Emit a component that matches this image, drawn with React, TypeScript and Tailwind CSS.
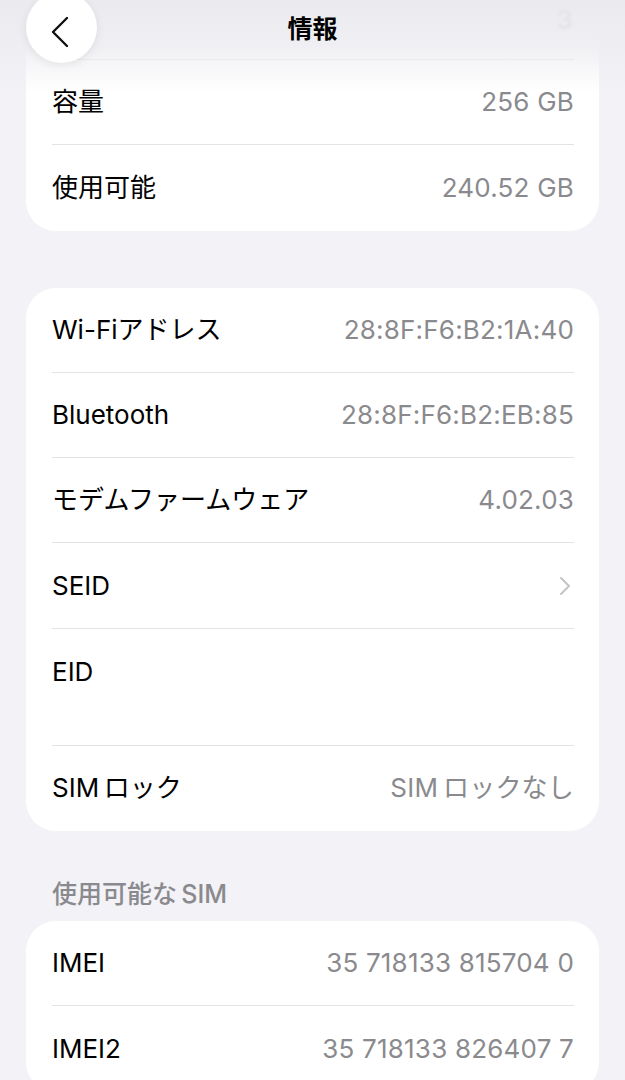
import React from "react";

type Row = {
  label: string;
  value?: string;
  chevron?: boolean;
  tall?: boolean;
};

const storageRows: Row[] = [
  { label: "容量", value: "256 GB" },
  { label: "使用可能", value: "240.52 GB" },
];

const networkRows: Row[] = [
  { label: "Wi-Fiアドレス", value: "28:8F:F6:B2:1A:40" },
  { label: "Bluetooth", value: "28:8F:F6:B2:EB:85" },
  { label: "モデムファームウェア", value: "4.02.03" },
  { label: "SEID", chevron: true },
  { label: "EID", tall: true },
  { label: "SIM\u2009ロック", value: "SIM\u2009ロックなし" },
];

const simRows: Row[] = [
  { label: "IMEI", value: "35 718133 815704 0" },
  { label: "IMEI2", value: "35 718133 826407 7" },
];

function Chevron() {
  return (
    <svg width="12" height="20" viewBox="0 0 12 20" fill="none">
      <path d="M2 2l8 8-8 8" stroke="#c4c4c7" strokeWidth="2" strokeLinecap="round" strokeLinejoin="round" />
    </svg>
  );
}

function Card({ rows, top }: { rows: Row[]; top?: boolean }) {
  return (
    <div className="mx-[26px] rounded-[30px] bg-white pl-[26px] pr-[25px]">
      {top && <div className="h-[85px] border-b border-[#e3e3e6]" />}
      {rows.map((row, i) => (
        <div
          key={row.label}
          className={
            "flex justify-between " +
            (row.tall ? "h-[117px] items-start pt-[26px] " : "h-[85.3px] items-center ") +
            (i < rows.length - 1 ? "border-b border-[#e3e3e6]" : "")
          }
        >
          <span className="text-[26px] leading-[34px] text-black">{row.label}</span>
          {row.value && (
            <span className="text-[26px] leading-[34px] tracking-[0.2px] text-[#8a8a8e]">{row.value}</span>
          )}
          {row.chevron && (
            <span className="pr-[3px]">
              <Chevron />
            </span>
          )}
        </div>
      ))}
    </div>
  );
}

export default function App() {
  return (
    <div
      className="relative h-[1080px] w-[625px] overflow-hidden bg-[#f2f2f7]"
      style={{ fontFamily: '"Inter", "Noto Sans CJK JP", sans-serif' }}
    >
      <div className="-mt-[25px]">
        <Card rows={storageRows} top />
        <div className="h-[57px]" />
        <Card rows={networkRows} />
        <div className="pl-[52px] pt-[46px] pb-[10px] text-[25px] font-medium leading-[34px] text-[#8a8a8e]">
          使用可能な{"\u2009"}SIM
        </div>
        <Card rows={simRows} />
      </div>

      {/* blurred nav bar */}
      <div className="absolute inset-x-0 top-0 h-[92px] bg-gradient-to-b from-[#ebebef] via-[#eeeef2]/90 to-transparent" />
      <div className="absolute inset-x-0 top-0 flex h-[60px] items-center justify-center">
        <span className="text-[25px] font-bold text-black">情報</span>
      </div>
      <span className="absolute right-[52px] top-[0px] text-[26px] font-semibold text-[#e4e4e8] blur-[1px]">3</span>
      <div className="absolute left-[26px] top-[-8px] flex h-[71px] w-[71px] items-center justify-center rounded-full bg-white shadow-[0_2px_10px_rgba(0,0,0,0.08)]">
        <svg width="20" height="32" viewBox="0 0 20 32" fill="none" className="mt-[8px] -ml-[4px]">
          <path d="M17 2L3 16l14 14" stroke="#111" strokeWidth="2.4" strokeLinecap="round" strokeLinejoin="round" />
        </svg>
      </div>
    </div>
  );
}
